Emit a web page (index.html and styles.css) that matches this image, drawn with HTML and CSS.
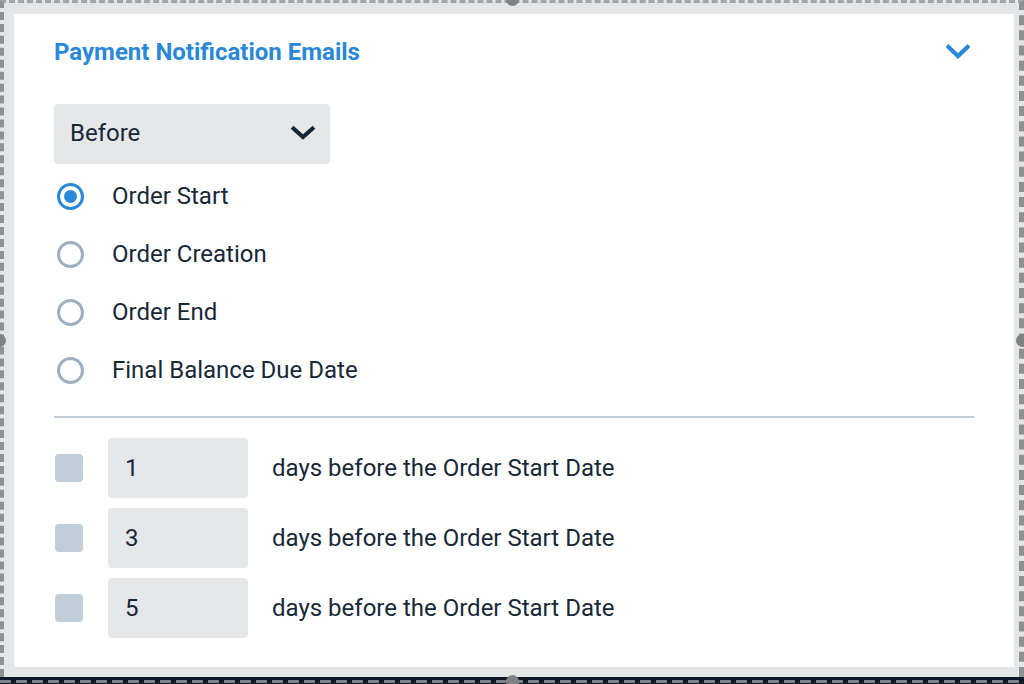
FILE: index.html
```html
<!DOCTYPE html>
<html lang="en">
<head>
<meta charset="utf-8">
<title>Payment Notification Emails</title>
<link rel="stylesheet" href="styles.css">
</head>
<body>
<div class="frame">
  <div class="canvas">
    <section class="card">
      <header class="card-head">
        <h2 class="title">Payment Notification Emails</h2>
        <span class="toggle">
          <svg width="24" height="16" viewBox="0 0 24 16"><path d="M2.5 3 L12 12 L21.5 3" fill="none" stroke="#2a88d8" stroke-width="4.2" stroke-linecap="square"/></svg>
        </span>
      </header>

      <div class="select">
        <span>Before</span>
        <svg width="26" height="16" viewBox="0 0 26 16"><path d="M3.5 3.5 L13 12 L22.5 3.5" fill="none" stroke="#152536" stroke-width="4" stroke-linecap="square"/></svg>
      </div>

      <ul class="radios">
        <li class="radio-row"><span class="radio checked"></span><span>Order Start</span></li>
        <li class="radio-row"><span class="radio"></span><span>Order Creation</span></li>
        <li class="radio-row"><span class="radio"></span><span>Order End</span></li>
        <li class="radio-row"><span class="radio"></span><span>Final Balance Due Date</span></li>
      </ul>

      <hr class="divider">

      <ul class="days">
        <li class="day-row"><span class="check"></span><span class="num">1</span><span>days before the Order Start Date</span></li>
        <li class="day-row"><span class="check"></span><span class="num">3</span><span>days before the Order Start Date</span></li>
        <li class="day-row"><span class="check"></span><span class="num">5</span><span>days before the Order Start Date</span></li>
      </ul>
    </section>
  </div>
  <div class="bottom-edge"></div>

  <span class="handle h-top"></span>
  <span class="handle h-left"></span>
  <span class="handle h-right"></span>
  <span class="handle h-bottom"></span>
</div>
</body>
</html>
```

FILE: styles.css
```css
* { box-sizing: border-box; }

html, body {
  margin: 0;
  padding: 0;
  background: #e4e5e7;
  font-family: Roboto, "Liberation Sans", Arial, sans-serif;
  color: #172838;
}

.frame {
  position: relative;
  width: 1024px;
  height: 684px;
  overflow: hidden;
  display: flex;
  flex-direction: column;
}

.canvas {
  height: 677px;
  background: #e4e5e7;
  border-left: 4px dashed #8e9092;
  border-right: 5px dashed #8e9092;
  border-top: 3px dashed #a2a4a6;
  padding: 11px 5px 10px 10px;
}

.bottom-edge {
  height: 7px;
  background:
    repeating-linear-gradient(90deg, #7d8186 0 11px, transparent 11px 16px) 0 3px / 100% 3px no-repeat,
    #0e1a28;
}

.card {
  background: #fff;
  height: 653px;
  padding: 24px 40px 0 40px;
}

.card-head {
  display: flex;
  align-items: center;
  justify-content: space-between;
  height: 28px;
}

.title {
  margin: 0;
  font-size: 24px;
  font-weight: 700;
  color: #2a88d8;
}

.toggle {
  display: flex;
  margin-right: 4px;
}

.select {
  margin-top: 38px;
  width: 276px;
  height: 60px;
  background: #e6e7e9;
  border-radius: 4px;
  display: flex;
  align-items: center;
  justify-content: space-between;
  padding: 0 14px 2px 16px;
  font-size: 24px;
}

.radios, .days {
  list-style: none;
  margin: 0;
  padding: 0;
}

.radios { margin-top: 3px; }

.radio-row {
  height: 58px;
  display: flex;
  align-items: center;
  font-size: 24px;
}

.radio {
  width: 27px;
  height: 27px;
  border-radius: 50%;
  border: 3px solid #9cb0c2;
  margin-left: 3px;
  margin-right: 28px;
  display: flex;
  align-items: center;
  justify-content: center;
}

.radio.checked { border-color: #2a88d8; }
.radio.checked::after {
  content: "";
  width: 13px;
  height: 13px;
  border-radius: 50%;
  background: #2a88d8;
}

.divider {
  margin: 17px 0 0 0;
  border: 0;
  height: 2px;
  background: #c3cfd8;
}

.days {
  margin-top: 20px;
  display: flex;
  flex-direction: column;
  gap: 10px;
}

.day-row {
  display: flex;
  align-items: center;
  height: 60px;
  font-size: 24px;
}

.check {
  width: 28px;
  height: 28px;
  border-radius: 4px;
  background: #c1ced8;
  margin-left: 1px;
  margin-right: 25px;
}

.num {
  width: 140px;
  height: 60px;
  background: #e6e7e9;
  border-radius: 4px;
  display: flex;
  align-items: center;
  padding-left: 17px;
  margin-right: 24px;
}

.handle {
  position: absolute;
  width: 13px;
  height: 13px;
  border-radius: 50%;
  background: #808285;
}
.h-top { left: 506px; top: -7px; }
.h-bottom { left: 506px; top: 675px; }
.h-left { left: -7px; top: 334px; }
.h-right { left: 1016px; top: 334px; }
```
